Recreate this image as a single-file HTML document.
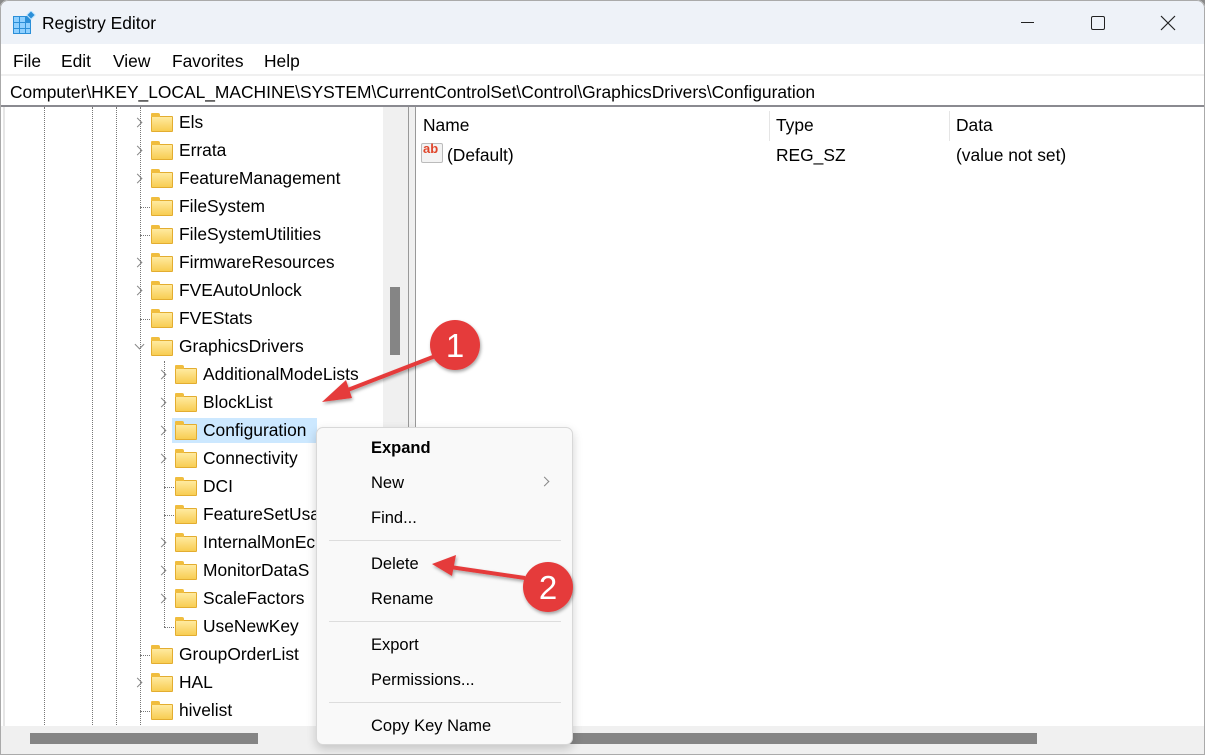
<!DOCTYPE html>
<html><head><meta charset="utf-8"><style>
*{margin:0;padding:0;box-sizing:border-box}
body{width:1205px;height:755px;overflow:hidden;background:#8a8a8a;font-family:"Liberation Sans",sans-serif;color:#000;position:relative}
.win{position:absolute;left:0;top:0;width:1205px;height:755px;background:#fff;border-radius:8px 8px 0 0;overflow:hidden}
.frame{position:absolute;left:0;top:0;width:1205px;height:755px;border-radius:8px 8px 0 0;box-shadow:inset 0 0 0 1px #aaa;pointer-events:none}
.t{position:absolute;white-space:nowrap;font-size:17.4px;line-height:20px}
.fold{position:absolute;width:22px;height:16px;background:linear-gradient(#ffeaa0,#f8cd52);border:1px solid #e3ad30;border-radius:1px}
.fold:before{content:"";position:absolute;left:-1px;top:-4px;width:9px;height:4px;background:#f0bd3e;border-radius:1px 2px 0 0}
.chev{position:absolute;width:7px;height:7px;border-right:1.3px solid #888;border-bottom:1.3px solid #888;transform:rotate(-45deg)}
.vd{position:absolute;width:0;border-left:1px dotted #777}
.hd{position:absolute;height:0;border-top:1px dotted #777;width:10px}
.mi{position:absolute;left:54px;font-size:16.5px}
.sep{position:absolute;left:12px;width:232px;height:1px;background:#ddd}
</style></head><body>
<div class="win">
<div style="position:absolute;left:0;top:0;width:1205px;height:44px;background:#eef2f8"></div>
<svg style="position:absolute;left:12px;top:11px" width="24" height="24" viewBox="0 0 24 24"><rect x="1" y="5" width="18" height="18" fill="#2b8fd8"/><g fill="#8fd0ff"><rect x="2" y="6" width="5" height="5"/><rect x="8" y="6" width="5" height="5"/><rect x="2" y="12" width="5" height="5"/><rect x="8" y="12" width="5" height="5"/><rect x="14" y="12" width="4" height="5"/><rect x="2" y="18" width="5" height="4"/><rect x="8" y="18" width="5" height="4"/><rect x="14" y="18" width="4" height="4"/></g><rect x="16" y="1" width="6" height="6" transform="rotate(45 19 4)" fill="#2b8fd8" stroke="#bfe4ff"/></svg>
<div class="t" style="left:42px;top:13px;font-size:17.4px">Registry Editor</div>
<div style="position:absolute;left:1021px;top:22px;width:13px;height:1px;background:#222"></div>
<div style="position:absolute;left:1091px;top:16px;width:14px;height:14px;border:1.2px solid #222;border-radius:2px"></div>
<svg style="position:absolute;left:1160px;top:15px" width="16" height="16"><path d="M1 1L15 15M15 1L1 15" stroke="#222" stroke-width="1.2"/></svg>
<div class="t" style="left:13px;top:51px">File</div>
<div class="t" style="left:61px;top:51px">Edit</div>
<div class="t" style="left:113px;top:51px">View</div>
<div class="t" style="left:172px;top:51px">Favorites</div>
<div class="t" style="left:264px;top:51px">Help</div>
<div style="position:absolute;left:0;top:74px;width:1205px;height:2px;background:#f0f0f0"></div>
<div class="t" style="left:10px;top:82px">Computer\HKEY_LOCAL_MACHINE\SYSTEM\CurrentControlSet\Control\GraphicsDrivers\Configuration</div>
<div style="position:absolute;left:0;top:105px;width:1205px;height:2px;background:#8a8a90"></div>
<div style="position:absolute;left:3px;top:107px;width:2px;height:620px;background:#e6e6e6"></div>
<div style="position:absolute;left:383px;top:107px;width:25px;height:620px;background:#f0f0f0"></div>
<div style="position:absolute;left:390px;top:287px;width:10px;height:68px;background:#858585"></div>
<div style="position:absolute;left:408px;top:107px;width:8px;height:620px;background:#f0f0f0;border-left:1px solid #999;border-right:1px solid #999"></div>
<div class="vd" style="left:44px;top:107px;height:620px"></div>
<div class="vd" style="left:92px;top:107px;height:620px"></div>
<div class="vd" style="left:116px;top:107px;height:620px"></div>
<div class="vd" style="left:140px;top:107px;height:620px"></div>
<div class="vd" style="left:164px;top:361px;height:266px"></div>
<div style="position:absolute;left:172px;top:418px;width:145px;height:25px;background:#cce8ff"></div>
<div id="tree"></div>
<div style="position:absolute;left:769px;top:111px;width:1px;height:30px;background:#e5e5e5"></div>
<div style="position:absolute;left:949px;top:111px;width:1px;height:30px;background:#e5e5e5"></div>
<div class="t" style="left:423px;top:115px">Name</div>
<div class="t" style="left:776px;top:115px">Type</div>
<div class="t" style="left:956px;top:115px">Data</div>
<div style="position:absolute;left:421px;top:143px;width:22px;height:20px;background:#f3f3f3;border:1px solid #bbb;border-radius:2px"></div>
<div style="position:absolute;left:423px;top:141px;font-size:13px;font-weight:bold;color:#e0452a">ab</div>
<div class="t" style="left:447px;top:145px">(Default)</div>
<div class="t" style="left:776px;top:145px">REG_SZ</div>
<div class="t" style="left:956px;top:145px">(value not set)</div>
<div style="position:absolute;left:0;top:726px;width:1205px;height:29px;background:#f0f0f0"></div>
<div style="position:absolute;left:30px;top:733px;width:228px;height:11px;background:#858585"></div>
<div style="position:absolute;left:500px;top:733px;width:537px;height:11px;background:#858585"></div>
<div style="position:absolute;left:316px;top:427px;width:257px;height:318px;background:#f9f9f9;border:1px solid #d8d8d8;border-radius:7px;box-shadow:0 4px 10px rgba(0,0,0,.18)">
<div class="mi" style="top:11px;font-weight:bold">Expand</div>
<div class="mi" style="top:46px">New</div>
<div class="chev" style="left:224px;top:50px;width:7px;height:7px"></div>
<div class="mi" style="top:81px">Find...</div>
<div class="sep" style="top:112px"></div>
<div class="mi" style="top:127px">Delete</div>
<div class="mi" style="top:162px">Rename</div>
<div class="sep" style="top:193px"></div>
<div class="mi" style="top:208px">Export</div>
<div class="mi" style="top:243px">Permissions...</div>
<div class="sep" style="top:274px"></div>
<div class="mi" style="top:289px">Copy Key Name</div>
</div>
<svg style="position:absolute;left:0;top:0" width="1205" height="755">
<defs><filter id="s"><feDropShadow dx="1" dy="2" stdDeviation="1.5" flood-opacity=".35"/></filter></defs>
<g filter="url(#s)">
<path d="M438 355 L340 393" stroke="#e53a3a" stroke-width="4"/>
<path d="M322 402 L346 380 L352 398 Z" fill="#e53a3a"/>
<circle cx="455" cy="345" r="25" fill="#e53a3a"/>
<path d="M525 578 L450 567" stroke="#e53a3a" stroke-width="4"/>
<path d="M432 564 L456 555 L452 576 Z" fill="#e53a3a"/>
<circle cx="548" cy="587" r="25" fill="#e53a3a"/>
</g>
<text x="455" y="357" text-anchor="middle" font-family="Liberation Sans" font-size="33" fill="#fff">1</text>
<text x="548" y="599" text-anchor="middle" font-family="Liberation Sans" font-size="33" fill="#fff">2</text>
</svg>
<div class="frame"></div>
</div>
<script>
var items=[["Els",1,1],["Errata",1,1],["FeatureManagement",1,1],["FileSystem",1,0],["FileSystemUtilities",1,0],["FirmwareResources",1,1],["FVEAutoUnlock",1,1],["FVEStats",1,0],["GraphicsDrivers",1,2],["AdditionalModeLists",2,1],["BlockList",2,1],["Configuration",2,1],["Connectivity",2,1],["DCI",2,0],["FeatureSetUsa",2,0],["InternalMonEc",2,1],["MonitorDataS",2,1],["ScaleFactors",2,1],["UseNewKey",2,0],["GroupOrderList",1,0],["HAL",1,1],["hivelist",1,0]];
var h="";items.forEach(function(it,i){var cy=123+28*i,off=(it[1]-1)*24;var fx=151+off,cx=140+off;
if(it[2]==1)h+='<div class="chev" style="left:'+(cx-6)+'px;top:'+(cy-4)+'px"></div>';
else if(it[2]==2)h+='<div class="chev" style="left:'+(cx-4)+'px;top:'+(cy-6)+'px;transform:rotate(45deg)"></div>';
else h+='<div class="hd" style="left:'+cx+'px;top:'+cy+'px"></div>';
h+='<div class="fold" style="left:'+fx+'px;top:'+(cy-7)+'px"></div>';
h+='<div class="t" style="left:'+(fx+28)+'px;top:'+(cy-11)+'px">'+it[0]+'</div>';});
document.getElementById("tree").outerHTML=h;
</script>
</body></html>
